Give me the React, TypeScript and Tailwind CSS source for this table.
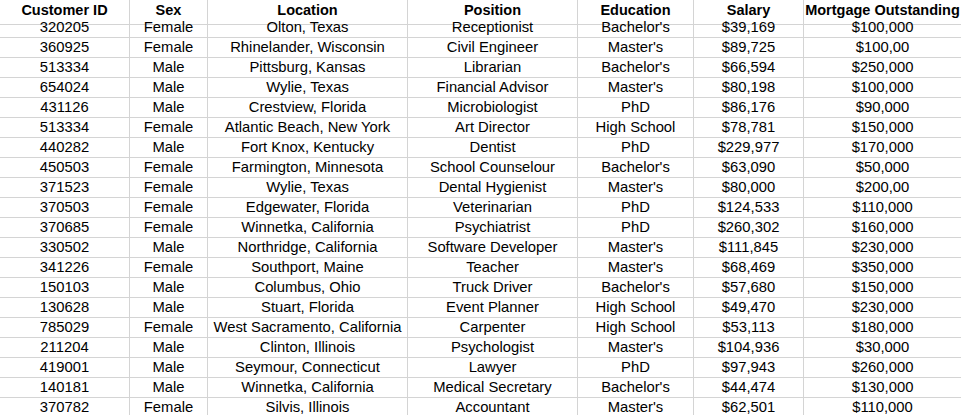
import React from "react";

type Row = [string, string, string, string, string, string, string];

const HEADERS = ["Customer ID", "Sex", "Location", "Position", "Education", "Salary", "Mortgage Outstanding"];

const ROWS: Row[] = [
  ["320205", "Female", "Olton, Texas", "Receptionist", "Bachelor's", "$39,169", "$100,000"],
  ["360925", "Female", "Rhinelander, Wisconsin", "Civil Engineer", "Master's", "$89,725", "$100,00"],
  ["513334", "Male", "Pittsburg, Kansas", "Librarian", "Bachelor's", "$66,594", "$250,000"],
  ["654024", "Male", "Wylie, Texas", "Financial Advisor", "Master's", "$80,198", "$100,000"],
  ["431126", "Male", "Crestview, Florida", "Microbiologist", "PhD", "$86,176", "$90,000"],
  ["513334", "Female", "Atlantic Beach, New York", "Art Director", "High School", "$78,781", "$150,000"],
  ["440282", "Male", "Fort Knox, Kentucky", "Dentist", "PhD", "$229,977", "$170,000"],
  ["450503", "Female", "Farmington, Minnesota", "School Counselour", "Bachelor's", "$63,090", "$50,000"],
  ["371523", "Female", "Wylie, Texas", "Dental Hygienist", "Master's", "$80,000", "$200,00"],
  ["370503", "Female", "Edgewater, Florida", "Veterinarian", "PhD", "$124,533", "$110,000"],
  ["370685", "Female", "Winnetka, California", "Psychiatrist", "PhD", "$260,302", "$160,000"],
  ["330502", "Male", "Northridge, California", "Software Developer", "Master's", "$111,845", "$230,000"],
  ["341226", "Female", "Southport, Maine", "Teacher", "Master's", "$68,469", "$350,000"],
  ["150103", "Male", "Columbus, Ohio", "Truck Driver", "Bachelor's", "$57,680", "$150,000"],
  ["130628", "Male", "Stuart, Florida", "Event Planner", "High School", "$49,470", "$230,000"],
  ["785029", "Female", "West Sacramento, California", "Carpenter", "High School", "$53,113", "$180,000"],
  ["211204", "Male", "Clinton, Illinois", "Psychologist", "Master's", "$104,936", "$30,000"],
  ["419001", "Male", "Seymour, Connecticut", "Lawyer", "PhD", "$97,943", "$260,000"],
  ["140181", "Male", "Winnetka, California", "Medical Secretary", "Bachelor's", "$44,474", "$130,000"],
  ["370782", "Female", "Silvis, Illinois", "Accountant", "Master's", "$62,501", "$110,000"],
];

const GRID = "grid grid-cols-[130px_78px_200px_170px_116px_110px_157px]";

export default function App() {
  return (
    <div className="w-[961px] h-[415px] overflow-hidden bg-white text-black font-['Liberation_Sans',Arial,sans-serif]">
      {/* header row */}
      <div className={`${GRID} h-[18px] text-[14.5px]`}>
        {HEADERS.map((h, i) => (
          <div
            key={h}
            className={`flex items-center justify-center font-bold whitespace-nowrap border-b border-[#d4d4d4] pb-[2px] ${i < 6 ? "border-r" : ""}`}
          >
            {h}
          </div>
        ))}
      </div>

      {ROWS.map((r, ri) => (
        <div key={ri} className={`${GRID} h-[20px] text-[14.8px] leading-[17px]`}>
          {r.map((c, ci) => (
            <div
              key={ci}
              className={`flex items-center justify-center whitespace-nowrap border-b border-[#d4d4d4] pb-[1px] ${ci < 6 ? "border-r" : ""}`}
            >
              {c}
            </div>
          ))}
        </div>
      ))}
    </div>
  );
}
